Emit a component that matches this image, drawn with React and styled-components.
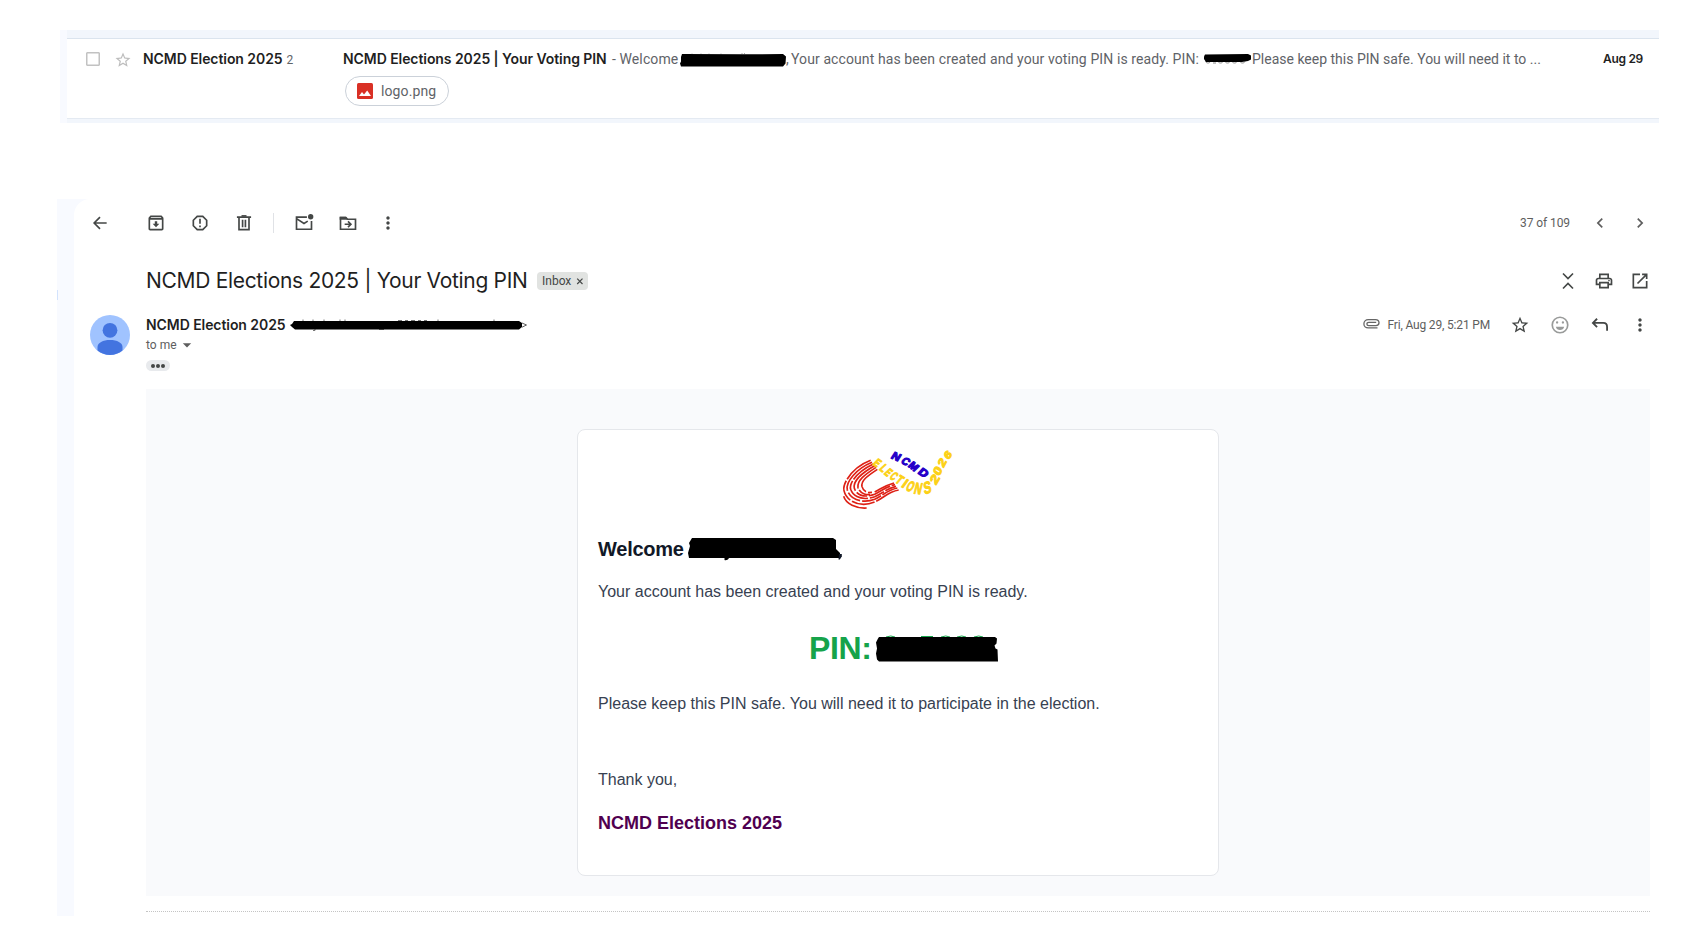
import React from "react";
import styled, { createGlobalStyle } from "styled-components";
import {
  MdOutlineArchive,
  MdReportGmailerrorred,
  MdMoreVert,
  MdChevronLeft,
  MdChevronRight,
  MdOutlinePrint,
  MdStarBorder,
  MdArrowDropDown,
} from "react-icons/md";

const Global = createGlobalStyle`
  * { box-sizing: border-box; }
  body { margin: 0; background: #fff; font-family: Roboto, "Liberation Sans", sans-serif; overflow: hidden; }
  svg { display: block; flex: none; }
`;

const Page = styled.main`
  height: 929px;
  padding-top: 30px;
  overflow: hidden;
`;

/* ---------- inbox list ---------- */

const ListStrip = styled.section`
  width: 1599px;
  height: 93px;
  margin-left: 60px;
  padding-top: 8px;
  border-left: 7px solid #f8faff;
  background: #f2f6fc;
`;

const ListRow = styled.div`
  display: grid;
  grid-template-columns: 28px 29px 200px 1fr auto;
  height: 81px;
  padding: 10px 16px 0 19px;
  border-top: 1px solid #dbe4ee;
  border-bottom: 1px solid #e4eaf2;
  background: #fff;
  line-height: 20px;
`;

const Checkbox = styled.span`
  width: 14px;
  height: 14px;
  margin-top: 3px;
  border: 1.5px solid #c2c2c2;
  border-radius: 1px;
  box-shadow: inset 0 0 0 0.5px #c2c2c2;
`;

const RowStar = styled(MdStarBorder)`
  margin-top: 2px;
  color: #bdbdbd;
`;

const Strong = styled.span`
  font: 600 14px/20px Inter, sans-serif;
  letter-spacing: -0.07px;
  color: #1f1f1f;
  white-space: pre;
`;

const RowSubject = styled(Strong)`
  width: 269px;
  flex: none;
`;

const Thread = styled.span`
  margin-left: 4px;
  font-size: 12px;
  color: #5f6368;
`;

const Summary = styled.div`
  display: flex;
  height: 20px;
`;

const Piece = styled.span`
  width: ${(p) => p.$w}px;
  flex: none;
  font-size: 14px;
  letter-spacing: ${(p) => p.$ls || 0}px;
  color: #5f6368;
  white-space: pre;
`;

const RowDate = styled.span`
  font: 600 12px/20px Inter, sans-serif;
  letter-spacing: -0.3px;
  color: #1f1f1f;
`;

const Attachment = styled.div`
  display: flex;
  align-items: center;
  gap: 8px;
  width: 104px;
  height: 30px;
  margin: 7px 0 0 2px;
  padding-left: 11px;
  border: 1px solid #cbd1d9;
  border-radius: 15px;
  font-size: 14px;
  letter-spacing: 0.1px;
  color: #5f6368;
`;

/* ---------- open message ---------- */

const Frame = styled.section`
  position: relative;
  height: 717px;
  margin: 76px 0 0 57px;
  padding-left: 17px;
  background: #f8faff;
`;

const NavSliver = styled.i`
  position: absolute;
  left: 0;
  top: 91px;
  width: 1px;
  height: 10px;
  background: #d3e3fd;
`;

const Pane = styled.div`
  height: 100%;
  padding: 0 50px 0 16px;
  border-radius: 16px 0 0 0;
  background: #fff;
  color: #444746;
`;

const Toolbar = styled.div`
  display: flex;
  align-items: center;
  gap: 24px;
  height: 48px;
`;

const BackSlot = styled.span`
  margin-right: 12px;
`;

const Divider = styled.span`
  width: 1px;
  height: 20px;
  margin: 0 -4px 0 -5px;
  background: #e0e2e6;
`;

const MoreSlot = styled.span`
  margin-left: -4px;
`;

const Pager = styled.div`
  display: flex;
  align-items: center;
  gap: 20px;
  margin-left: auto;
  font-size: 12px;
  letter-spacing: -0.08px;
  color: #5e5e5e;
`;

const SubjectBar = styled.div`
  display: flex;
  align-items: center;
  height: 44px;
  margin-top: 12px;
  padding-left: 56px;
`;

const Subject = styled.h1`
  width: 391px;
  margin: 0;
  font: 400 21px/28px Inter, sans-serif;
  letter-spacing: -0.31px;
  color: #1f1f1f;
  white-space: nowrap;
`;

const Label = styled.span`
  display: flex;
  align-items: center;
  gap: 5px;
  width: 51px;
  height: 18px;
  padding-left: 5px;
  border-radius: 4px;
  background: #e1e3e1;
  font-size: 12px;
  color: #444746;
`;

const Actions = styled.div`
  display: flex;
  align-items: center;
  gap: ${(p) => p.$gap}px;
  margin-left: auto;
`;

const Header = styled.div`
  display: grid;
  grid-template-columns: 40px 1fr auto;
  column-gap: 16px;
  height: 74px;
  margin-top: 12px;
`;

const SenderLine = styled.div`
  display: flex;
  height: 20px;
  font-size: 12px;
  line-height: 20px;
  color: #5e5e5e;
`;

const SenderName = styled(Strong)`
  width: 144px;
`;

const Recipient = styled.div`
  display: flex;
  align-items: center;
  height: 20px;
  font-size: 12px;
  color: #5e5e5e;
`;

const Quoted = styled.div`
  display: flex;
  align-items: center;
  justify-content: center;
  gap: 1px;
  width: 24px;
  height: 11px;
  margin-top: 5px;
  border-radius: 6px;
  background: #e8eaed;
`;

const Dot = styled.i`
  width: 4px;
  height: 4px;
  border-radius: 50%;
  background: #444746;
`;

const Meta = styled.div`
  display: flex;
  align-items: center;
  height: 20px;
`;

const Time = styled.span`
  width: 122.5px;
  margin-left: 8px;
  font-size: 12px;
  letter-spacing: -0.17px;
  color: #5e5e5e;
`;

const Body = styled.div`
  height: 507px;
  margin-left: 56px;
  padding-top: 40px;
  background: #f9fafc;
`;

const Card = styled.article`
  width: 642px;
  height: 447px;
  margin: 0 auto;
  padding: 10px 20px 0;
  border: 1px solid #e5e7eb;
  border-radius: 8px;
  background: #fff;
  font-family: "Liberation Sans", Arial, sans-serif;
`;

const LogoSlot = styled.div`
  display: flex;
  justify-content: center;
`;

const Greeting = styled.h2`
  display: flex;
  height: 24px;
  margin: 17px 0 19px;
  font-size: 20px;
  letter-spacing: -0.25px;
  line-height: 24px;
  color: #111827;
`;

const GreetingWord = styled.span`
  width: 90px;
`;

const Text = styled.p`
  margin: 0;
  font-size: 16px;
  line-height: 24px;
  color: #374151;
`;

const PinLine = styled.div`
  display: flex;
  height: 40px;
  margin: 24px 0 24px 211px;
  font-size: 32px;
  font-weight: 700;
  letter-spacing: -0.4px;
  line-height: 40px;
  color: #16a34a;
`;

const PinWord = styled.span`
  width: 66px;
`;

const Thanks = styled(Text)`
  margin-top: 52px;
`;

const Signature = styled.p`
  margin: 19px 0 0;
  font-size: 18px;
  font-weight: 700;
  line-height: 24px;
  color: #500050;
`;

const Rule = styled.div`
  margin: 15px 0 0 56px;
  border-top: 1px dotted #c4c4c4;
`;

/* ---------- drawings ---------- */

const Glyph = ({ children, size = 20 }) => (
  <svg width={size} height={size} viewBox="0 0 24 24" fill="none" stroke="currentColor" strokeWidth="2">
    {children}
  </svg>
);

const BackIcon = () => (
  <Glyph><path d="M20 12H5M12 5L5 12l7 7" /></Glyph>
);

const TrashIcon = () => (
  <Glyph>
    <path d="M3.500 5h17M6 5v15h12V5M10.300 8v9M13.700 8v9" />
    <path d="M9 3.500h6" />
  </Glyph>
);

const UnreadIcon = () => (
  <Glyph>
    <path d="M15.500 5H3v14.500h18V9.500M3.500 7l8.500 5.500 4.500-2.800" />
    <circle cx="20" cy="4.500" r="3.200" fill="currentColor" stroke="none" />
  </Glyph>
);

const MoveIcon = () => (
  <Glyph>
    <path d="M3 5.500V19.500h18V7.500H11.500l-2-2z" />
    <path d="M2 4.500h7.500l2.500 3.500H2z" fill="currentColor" stroke="none" />
    <path d="M8 13.500h7M12 10l3.500 3.500L12 17" />
  </Glyph>
);

const CollapseIcon = () => (
  <Glyph><path d="M6 3l6 6 6-6M6 21l6-6 6 6" /></Glyph>
);

const PopOutIcon = () => (
  <Glyph><path d="M12 4H4v16h16v-8M14.500 4H20v5.500M20 4L9 15" /></Glyph>
);

const ReplyIcon = () => (
  <Glyph><path d="M8.500 4.500L3.500 9.500l5 5M3.500 9.500H16c3 0 4.500 2 4.500 5V19" strokeWidth="2.200" /></Glyph>
);

const SmileIcon = () => (
  <Glyph>
    <g stroke="#999b9a">
      <circle cx="12" cy="12" r="9.300" />
      <path d="M7 14h10c-.6 2.500-2.500 4-5 4s-4.400-1.500-5-4z" fill="#999b9a" stroke="none" />
      <circle cx="8.500" cy="9" r="1.400" fill="#999b9a" stroke="none" />
      <circle cx="15.500" cy="9" r="1.400" fill="#999b9a" stroke="none" />
    </g>
  </Glyph>
);

const ClipIcon = () => (
  <svg width="17" height="20" viewBox="0 0 17 20" fill="none" stroke="#666" strokeWidth="1.300">
    <path d="M14.500 12.800H5.300C2.600 12.800.9 11.200.9 8.900s1.700-4.300 4.400-4.300h7.200c2 0 3.500 1.400 3.500 3.200s-1.400 2.800-3 2.800H5.800c-1.200 0-1.900-.6-1.900-1.600s.7-1.700 1.900-1.700h7.400" />
  </svg>
);

const CloseIcon = () => (
  <svg width="8" height="8" viewBox="0 0 8 8" fill="none" stroke="#444746" strokeWidth="1.200">
    <path d="M1.200 1.700l5.300 5.300M6.500 1.700L1.200 7" />
  </svg>
);

const PictureIcon = () => (
  <svg width="16" height="16" viewBox="0 0 16 16">
    <rect width="16" height="16" rx="1.500" fill="#d93025" />
    <path d="M2 13l3-4 2 2.500L10.200 7.500 14 13z" fill="#fff" />
  </svg>
);

const AvatarIcon = () => (
  <svg width="40" height="40" viewBox="0 0 40 40">
    <circle cx="20" cy="20" r="20" fill="#a0c3ff" />
    <circle cx="20" cy="15.300" r="7.400" fill="#4374e0" />
    <path d="M7.500 35.500V32c0-4.300 5.500-7 12.500-7s12.500 2.700 12.500 7v3.500A20 20 0 0 1 20 40a20 20 0 0 1-12.500-4.500z" fill="#4374e0" />
  </svg>
);

const NameMark = () => (
  <svg width="106" height="20" viewBox="0 0 106 20">
    <path d="M12 5.500v-1M21 5.500v-1M29 5.500v-1M41 5.500v-1M62 5v-1M64.500 5v-1" stroke="#aaa" />
    <path d="M2 5l61 .3 40-.3 3 2.500-.5 7-2.500 3H1L0 14.500l1-2V8z" />
  </svg>
);

const ShortPinMark = () => (
  <svg width="48" height="20" viewBox="0 0 48 20">
    <path d="M1.500 12.500c1 2 4 2 5 0M9 14h3M14 12.500c1 2 4 2 5 0M21 12.500c1 2 4 2 5 0M28 12.500c1 2 4 2 5 0M36 12.500c1 2 4 2 5 0" stroke="#888" fill="none" />
    <path d="M1 5.500L44 5l3 1.500v4L44 12l-6 1H2L0 10V7.500z" />
  </svg>
);

const AddressMark = () => (
  <svg width="237" height="20" viewBox="0 0 237 20">
    <path d="M13 6V4.500M23 6V4.500M34 6V4.500M50 6V4.500M55 6V4.500M108 5.500h4M115 5.500h3M121 5.500h4M128 5.500h3M134 5.500h3M148 6V4.500M204 6V4.500M25 14v1.500h-2M89 14.500h5" stroke="#777" fill="none" />
    <path d="M4 6h225l3 2v4l-3 2.500H5l-3-2.500-2-2 2-1z" />
    <path d="M232 8l4.500 2-4.500 2.200" stroke="#5e5e5e" fill="none" />
  </svg>
);

const GreetingMark = () => (
  <svg width="156" height="24" viewBox="0 0 156 24">
    <path d="M4 1h141l3 2v9l4 4v5H41c-1 2-3 2.500-4.500 2V21H1l-1-5 2-7-1-3z" />
    <path d="M151 17h2.800v2.500l-2 3h-1.300z" fill="#111827" />
  </svg>
);

const PinMark = () => (
  <svg width="124" height="40" viewBox="0 0 124 40">
    <path d="M11 9q5-2 9 0M46 8.500h12M66 9q5-2 9 0M82 9q5-2 9 0M99 9q5-2 9 0" stroke="#16a34a" strokeWidth="1" fill="none" />
    <path d="M4 9h116l2 1.500-.5 5-2 2 1 3 2 1 .5 12H4l-2-2-1-6 1-5-1-6 2-4z" />
  </svg>
);

/* letter, centre x, centre y, rotation, font size, horizontal scale */
const blueLetters = [
  ["N", 199, 49, 24, 38, 0.95],
  ["C", 228, 64, 36, 38, 0.8],
  ["M", 252, 79, 38, 38, 0.85],
  ["D", 281, 98, 34, 38, 1],
];
const yellowLetters = [
  ["E", 143, 68, 36, 42, 0.6],
  ["L", 162, 84, 40, 42, 0.6],
  ["E", 176, 97, 40, 42, 0.55],
  ["C", 193, 108, 36, 44, 0.5],
  ["T", 210, 119, 32, 46, 0.6],
  ["I", 226, 130, 28, 48, 0.8],
  ["O", 242, 138, 20, 52, 0.5],
  ["N", 265, 145, 6, 56, 0.56],
  ["S", 292, 142, -14, 58, 0.6],
  ["2", 314, 117, -60, 42, 1.1],
  ["0", 323, 92, -66, 40, 1.05],
  ["2", 336, 67, -62, 38, 1.05],
  ["6", 353, 44, -50, 36, 1.05],
];

const tracks = [
  ["M122 61C72 80 36 128 42 152C50 188 96 202 134 186C162 174 172 156 206 150", "92 5 66 6 70 5"],
  ["M126 67C80 86 46 126 52 150C60 178 98 192 134 178C160 166 172 150 202 144", "120 6 44 6 60 5"],
  ["M130 72C88 92 56 126 62 148C70 172 100 183 134 170C158 160 170 146 198 139", "76 5 90 6 46 5"],
  ["M134 77C96 98 68 124 73 145C80 166 104 174 134 163C156 152 168 140 195 134", "104 6 34 6 70 5"],
  ["M138 82C104 104 80 122 84 143C90 160 108 166 120 163M134 156C154 146 166 136 192 129", "88 5 60 5"],
  ["M142 88C112 108 92 122 96 140C98 148 102 152 108 155M114 158L126 157", "200"],
];

const Letters = ({ items, color, weight }) => (
  <g fill={color} stroke={color} strokeWidth={weight} strokeLinejoin="round" fontFamily="'Liberation Sans', sans-serif" fontWeight="700" textAnchor="middle">
    {items.map(([ch, x, y, turn, size, sx], i) => (
      <text key={i} fontSize={size} y={size * 0.36} transform={`translate(${x} ${y}) rotate(${turn}) skewX(-8) scale(${sx} .86)`}>
        {ch}
      </text>
    ))}
  </g>
);

const Logo = () => (
  <svg width="140" height="80" viewBox="-6 0 420 240">
    <g fill="none" stroke="#de2015" strokeWidth="5">
      {tracks.map(([d, dash]) => (
        <path key={d} d={d} strokeDasharray={dash} />
      ))}
      <path d="M41 169C48 192 78 206 110 204" />
    </g>
    <Letters items={yellowLetters} color="#fcd116" weight={3.5} />
    <Letters items={blueLetters} color="#2600c8" weight={4} />
  </svg>
);

/* ---------- screen ---------- */

export default function App() {
  return (
    <Page>
      <Global />
      <ListStrip>
        <ListRow>
          <Checkbox />
          <RowStar size={18} />
          <div><Strong>NCMD Election 2025</Strong><Thread>2</Thread></div>
          <div>
            <Summary>
              <RowSubject>NCMD Elections 2025 | Your Voting PIN</RowSubject>
              <Piece $w={68} $ls={0.1}>- Welcome</Piece>
              <NameMark />
              <Piece $w={5}>,</Piece>
              <Piece $w={413} $ls={0.1}>Your account has been created and your voting PIN is ready. PIN:</Piece>
              <ShortPinMark />
              <Piece $w={290}>Please keep this PIN safe. You will need it to ...</Piece>
            </Summary>
            <Attachment><PictureIcon />logo.png</Attachment>
          </div>
          <RowDate>Aug 29</RowDate>
        </ListRow>
      </ListStrip>

      <Frame>
        <NavSliver />
        <Pane>
          <Toolbar>
            <BackSlot><BackIcon /></BackSlot>
            <MdOutlineArchive size={20} />
            <MdReportGmailerrorred size={20} />
            <TrashIcon />
            <Divider />
            <UnreadIcon />
            <MoveIcon />
            <MoreSlot><MdMoreVert size={20} /></MoreSlot>
            <Pager>
              37 of 109
              <MdChevronLeft size={20} />
              <MdChevronRight size={20} />
            </Pager>
          </Toolbar>

          <SubjectBar>
            <Subject>NCMD Elections 2025 | Your Voting PIN</Subject>
            <Label>Inbox<CloseIcon /></Label>
            <Actions $gap={16}>
              <CollapseIcon />
              <MdOutlinePrint size={20} />
              <PopOutIcon />
            </Actions>
          </SubjectBar>

          <Header>
            <AvatarIcon />
            <div>
              <SenderLine>
                <SenderName>NCMD Election 2025</SenderName>
                <AddressMark />
              </SenderLine>
              <Recipient>to me<MdArrowDropDown size={20} /></Recipient>
              <Quoted><Dot /><Dot /><Dot /></Quoted>
            </div>
            <Meta>
              <ClipIcon />
              <Time>Fri, Aug 29, 5:21 PM</Time>
              <Actions $gap={20}>
                <MdStarBorder size={20} />
                <SmileIcon />
                <ReplyIcon />
                <MdMoreVert size={20} />
              </Actions>
            </Meta>
          </Header>

          <Body>
            <Card>
              <LogoSlot><Logo /></LogoSlot>
              <Greeting><GreetingWord>Welcome</GreetingWord><GreetingMark /></Greeting>
              <Text>Your account has been created and your voting PIN is ready.</Text>
              <PinLine><PinWord>PIN:</PinWord><PinMark /></PinLine>
              <Text>Please keep this PIN safe. You will need it to participate in the election.</Text>
              <Thanks>Thank you,</Thanks>
              <Signature>NCMD Elections 2025</Signature>
            </Card>
          </Body>
          <Rule />
        </Pane>
      </Frame>
    </Page>
  );
}
